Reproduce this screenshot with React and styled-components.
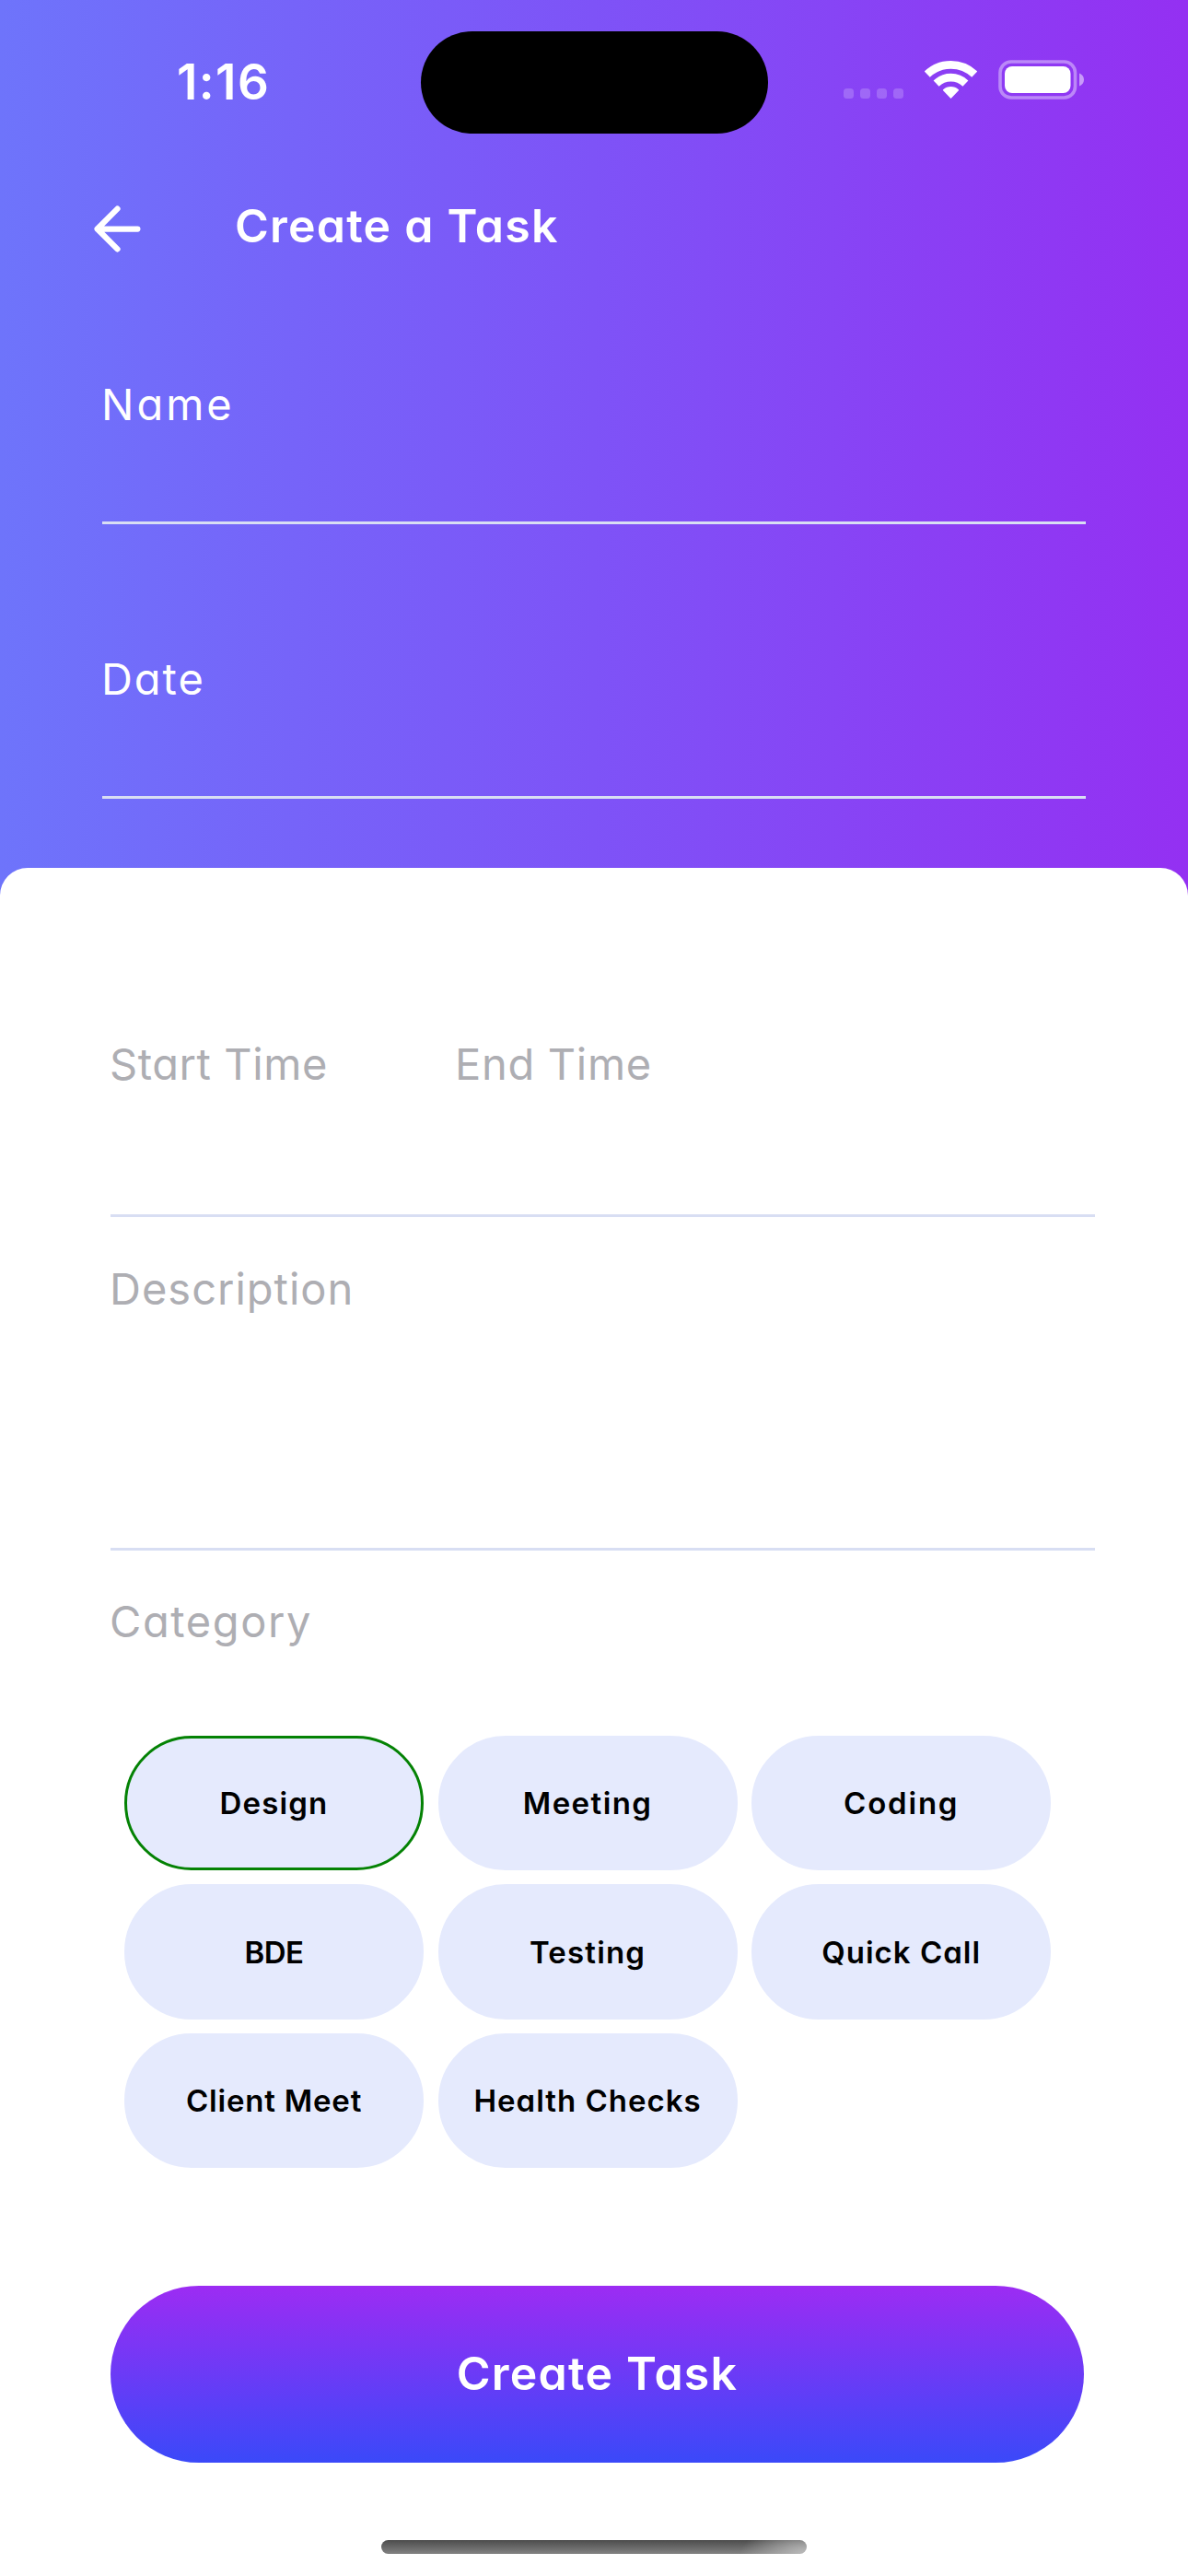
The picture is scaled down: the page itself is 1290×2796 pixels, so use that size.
import React, { useState } from "react";
import styled, { createGlobalStyle } from "styled-components";

const GlobalStyle = createGlobalStyle`
  *, *::before, *::after { box-sizing: border-box; }
  body {
    margin: 0;
    font-family: Inter, "Open Sans", sans-serif;
    font-feature-settings: "cv11";
  }
  button { font: inherit; font-feature-settings: inherit; border: 0; }
`;

const Screen = styled.div`
  width: 1290px;
  height: 2796px;
  display: flex;
  flex-direction: column;
  overflow: hidden;
  background: linear-gradient(90deg, #6e74fb 0%, #7e53f7 50%, #9430f2 100%);
`;

const StatusBar = styled.div`
  display: grid;
  grid-template-columns: 457px 376.5px 1fr;
  height: 178px;
  flex: none;
`;

const Clock = styled.div`
  padding-left: 192px;
  height: 178px;
  line-height: 178px;
  font-size: 53px;
  font-weight: 600;
  letter-spacing: 1.4px;
  color: #fff;
`;

const Island = styled.div`
  height: 111px;
  margin-top: 33.5px;
  border-radius: 56px;
  background: #000;
`;

const StatusIcons = styled.div`
  display: flex;
  align-items: flex-end;
  height: 108px;
  padding-left: 82.5px;
`;

const SignalDots = styled.div`
  display: flex;
  gap: 7px;
  margin: 0 23px 1px 0;
`;

const SignalDot = styled.span`
  width: 11px;
  height: 11px;
  border-radius: 3.5px;
  background: rgba(255, 255, 255, 0.2);
`;

const WifiIcon = styled.svg`
  width: 57px;
  height: 42px;
  margin: 0 23px 1px 0;
`;

const BatteryIcon = styled.svg`
  width: 94px;
  height: 43px;
`;

const AppBar = styled.header`
  display: flex;
  align-items: center;
  height: 140px;
  padding-left: 90px;
  flex: none;
`;

const BackButton = styled.button`
  display: flex;
  padding: 0;
  background: none;
  color: #fff;
`;

const Title = styled.h1`
  margin: 0 0 6px 90px;
  font-size: 50px;
  font-weight: 600;
  letter-spacing: 1.22px;
  color: #fff;
`;

const HeaderForm = styled.div`
  display: flex;
  flex-direction: column;
  gap: 133px;
  padding: 86px 111px 75px;
`;

const Label = styled.label`
  display: block;
  margin-left: -1px;
  height: 72px;
  line-height: 70px;
  font-size: 47px;
  font-weight: 400;
  letter-spacing: ${(p) => p.$tracking}px;
  color: ${(p) => (p.$onDark ? "#fff" : "#aeaeb3")};
`;

const HeaderField = styled.div`
  height: 165px;
  border-bottom: 3px solid #d8def3;
`;

const Sheet = styled.main`
  display: flex;
  flex-direction: column;
  flex: 1;
  padding: 178px 101px 0 120px;
  border-radius: 30px 30px 0 0;
  background: #fff;
`;

const TimeRow = styled.div`
  display: grid;
  grid-template-columns: 375px 1fr;
  height: 201px;
  border-bottom: 3px solid #d8def3;
`;

const DescriptionField = styled.div`
  height: 362px;
  padding-top: 43px;
  border-bottom: 3px solid #d8def3;
`;

const CategorySection = styled.section`
  padding-top: 42px;
`;

const ChipGrid = styled.div`
  display: grid;
  grid-template-columns: repeat(3, 325px);
  grid-auto-rows: 146.4px;
  gap: 15px 15.6px;
  margin: 87px 0 0 15px;
`;

const Chip = styled.button`
  padding: 0;
  border-radius: 74px;
  border: 3px solid ${(p) => (p.$selected ? "#048204" : "#e5eafd")};
  background: #e5eafd;
  color: #000;
  font-size: 33px;
  font-weight: 600;
  letter-spacing: ${(p) => p.$tracking}px;
`;

const SubmitButton = styled.button`
  width: 1057px;
  height: 192px;
  margin-top: 127.8px;
  padding: 0 0 2px;
  border-radius: 96px;
  background: linear-gradient(180deg, #9c2cf3 0%, #3a49f9 100%);
  color: #fff;
  font-size: 50px;
  font-weight: 600;
  letter-spacing: 1.24px;
`;

const HomeIndicator = styled.div`
  width: 462px;
  height: 15px;
  margin: 84px 0 0 294px;
  border-radius: 8px;
  background:
    radial-gradient(ellipse 72px 32px at 100% 100%, #bcbcbc 0%, rgba(188, 188, 188, 0) 100%),
    linear-gradient(180deg, #4c4c4c 0%, #828282 100%);
`;

const categories = [
  { name: "Design", tracking: 1.14 },
  { name: "Meeting", tracking: 1.43 },
  { name: "Coding", tracking: 1.8 },
  { name: "BDE", tracking: -0.6 },
  { name: "Testing", tracking: 1.18 },
  { name: "Quick Call", tracking: 1 },
  { name: "Client Meet", tracking: 0.8 },
  { name: "Health Checks", tracking: 1 },
];

function Wifi() {
  return (
    <WifiIcon viewBox="0 0 57 42" fill="none" stroke="#fff">
      <path d="M2.8 15.6A37.3 37.3 0 0 1 54.2 15.6" strokeWidth="8.6" />
      <path d="M12.6 25.6A22.8 22.8 0 0 1 44.4 25.6" strokeWidth="8.6" />
      <path
        d="M20.6 32.8A11.6 11.6 0 0 1 36.4 32.8L28.5 41Z"
        fill="#fff"
        strokeWidth="1.4"
        strokeLinejoin="round"
      />
    </WifiIcon>
  );
}

function Battery() {
  return (
    <BatteryIcon viewBox="0 0 94 43">
      <rect x="2" y="2" width="81.5" height="39" rx="12" fill="none" stroke="#fff" strokeOpacity="0.4" strokeWidth="3.6" />
      <rect x="7" y="7" width="71.5" height="29" rx="8" fill="#fff" />
      <path d="M88 14.5C91.2 15.8 93 18.5 93 21.5S91.2 27.2 88 28.5Z" fill="#fff" fillOpacity="0.5" />
    </BatteryIcon>
  );
}

function ArrowLeft() {
  return (
    <svg
      width="75"
      height="75"
      viewBox="0 0 24 24"
      fill="none"
      stroke="currentColor"
      strokeWidth="2"
      strokeLinecap="round"
      strokeLinejoin="round"
    >
      <path d="M19 12H5M12 19L5 12L12 5" />
    </svg>
  );
}

export default function App() {
  const [selected, setSelected] = useState("Design");

  return (
    <>
      <GlobalStyle />
      <Screen>
        <StatusBar>
          <Clock>1:16</Clock>
          <Island />
          <StatusIcons>
            <SignalDots>
              <SignalDot />
              <SignalDot />
              <SignalDot />
              <SignalDot />
            </SignalDots>
            <Wifi />
            <Battery />
          </StatusIcons>
        </StatusBar>

        <AppBar>
          <BackButton aria-label="Back">
            <ArrowLeft />
          </BackButton>
          <Title>Create a Task</Title>
        </AppBar>

        <HeaderForm>
          <HeaderField>
            <Label $onDark $tracking={3}>Name</Label>
          </HeaderField>
          <HeaderField>
            <Label $onDark $tracking={1.95}>Date</Label>
          </HeaderField>
        </HeaderForm>

        <Sheet>
          <TimeRow>
            <Label $tracking={0.58}>Start Time</Label>
            <Label $tracking={0.7}>End Time</Label>
          </TimeRow>
          <DescriptionField>
            <Label $tracking={1}>Description</Label>
          </DescriptionField>
          <CategorySection>
            <Label $tracking={1.6}>Category</Label>
            <ChipGrid>
              {categories.map(({ name, tracking }) => (
                <Chip
                  key={name}
                  $tracking={tracking}
                  $selected={name === selected}
                  onClick={() => setSelected(name)}
                >
                  {name}
                </Chip>
              ))}
            </ChipGrid>
          </CategorySection>
          <SubmitButton>Create Task</SubmitButton>
          <HomeIndicator />
        </Sheet>
      </Screen>
    </>
  );
}
